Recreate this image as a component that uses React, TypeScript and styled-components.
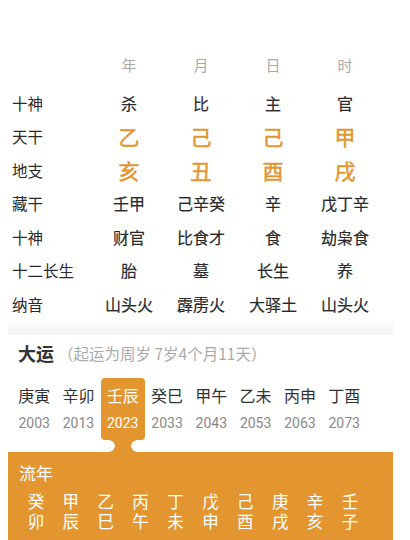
import React from "react";
import styled, { createGlobalStyle } from "styled-components";

const ORANGE = "#E3962F";

const Global = createGlobalStyle`
  html, body { margin: 0; padding: 0; background: #fff; }
  body {
    font-family: "Noto Sans CJK SC", "Noto Sans", sans-serif;
    color: #333;
    width: 410px;
    overflow: hidden;
  }
`;

const Page = styled.div`
  width: 410px;
  height: 540px;
  overflow: hidden;
`;

const Table = styled.div`
  padding-top: 47px;
  display: grid;
  grid-template-columns: 93px repeat(4, 72px);
`;

const HeadCell = styled.div`
  height: 34px;
  margin-bottom: 5px;
  display: flex;
  align-items: center;
  justify-content: center;
  font-size: 15px;
  color: #aaa;
`;

const Label = styled.div`
  height: 33.5px;
  display: flex;
  align-items: center;
  padding-left: 12px;
  font-size: 15.5px;
  color: #2a2a2a;
`;

const Cell = styled.div<{ $big?: boolean }>`
  height: 33.5px;
  display: flex;
  align-items: center;
  justify-content: center;
  font-size: ${(p) => (p.$big ? "21px" : "16px")};
  color: ${(p) => (p.$big ? ORANGE : "#2a2a2a")};
  -webkit-text-stroke: ${(p) => (p.$big ? "0.5px" : "0.2px")} currentColor;
`;

const Band = styled.div`
  margin: 1.5px 17px 0 8px;
  height: 13px;
  background: linear-gradient(#fafafa, #f5f5f5);
`;

const DaYunTitle = styled.div`
  margin-top: 6px;
  padding-left: 18px;
  height: 24px;
  display: flex;
  align-items: center;
  gap: 4px;
`;

const TitleMain = styled.span`
  font-size: 18px;
  font-weight: 700;
  color: #333;
`;

const TitleSub = styled.span`
  font-size: 15.5px;
  color: #aaa;
`;

const DaYunRow = styled.div`
  margin-top: 13px;
  padding-left: 12px;
  display: flex;
`;

const DaYunItem = styled.div`
  width: 44.3px;
  display: flex;
  flex-direction: column;
  align-items: center;
`;

const DaYunBox = styled.div<{ $active?: boolean }>`
  width: 44px;
  height: 62px;
  border-radius: 4px;
  background: ${(p) => (p.$active ? ORANGE : "transparent")};
  display: flex;
  flex-direction: column;
  align-items: center;
  padding-top: 5px;
  box-sizing: border-box;
`;

const GanZhi = styled.div<{ $active?: boolean }>`
  height: 24px;
  line-height: 24px;
  font-size: 16px;
  color: ${(p) => (p.$active ? "#fff" : "#333")};
`;

const Year = styled.div<{ $active?: boolean }>`
  margin-top: 6px;
  height: 20px;
  line-height: 20px;
  font-size: 14px;
  font-family: "Roboto", "Noto Sans", sans-serif;
  color: ${(p) => (p.$active ? "#fff" : "#888")};
`;

const Neck = styled.div<{ $active?: boolean }>`
  width: 28px;
  height: 12px;
  visibility: ${(p) => (p.$active ? "visible" : "hidden")};
  background:
    radial-gradient(circle at 0 50%, #fff 5.5px, transparent 6px),
    radial-gradient(circle at 100% 50%, #fff 5.5px, transparent 6px),
    ${ORANGE};
`;

const LiuNian = styled.div`
  margin: 0 17px 0 8px;
  background: ${ORANGE};
  padding: 10px 0 20px 10px;
  color: #fff;
`;

const LiuTitle = styled.div`
  height: 22px;
  line-height: 22px;
  font-size: 17px;
  padding-left: 1px;
`;

const LiuGrid = styled.div`
  margin-top: 7px;
  display: grid;
  grid-template-columns: repeat(10, 34.9px);
  padding-left: 0.5px;
`;

const LiuCell = styled.div`
  height: 20px;
  line-height: 20px;
  text-align: center;
  font-size: 16.5px;
`;

const pillars = [
  { shen: "杀", gan: "乙", zhi: "亥", cang: "壬甲", shen2: "财官", cs: "胎", ny: "山头火" },
  { shen: "比", gan: "己", zhi: "丑", cang: "己辛癸", shen2: "比食才", cs: "墓", ny: "霹雳火" },
  { shen: "主", gan: "己", zhi: "酉", cang: "辛", shen2: "食", cs: "长生", ny: "大驿土" },
  { shen: "官", gan: "甲", zhi: "戌", cang: "戊丁辛", shen2: "劫枭食", cs: "养", ny: "山头火" },
];

const rows: { label: string; key: keyof (typeof pillars)[0]; big?: boolean }[] = [
  { label: "十神", key: "shen" },
  { label: "天干", key: "gan", big: true },
  { label: "地支", key: "zhi", big: true },
  { label: "藏干", key: "cang" },
  { label: "十神", key: "shen2" },
  { label: "十二长生", key: "cs" },
  { label: "纳音", key: "ny" },
];

const dayun = [
  ["庚寅", "2003"],
  ["辛卯", "2013"],
  ["壬辰", "2023"],
  ["癸巳", "2033"],
  ["甲午", "2043"],
  ["乙未", "2053"],
  ["丙申", "2063"],
  ["丁酉", "2073"],
];

const liuGan = ["癸", "甲", "乙", "丙", "丁", "戊", "己", "庚", "辛", "壬"];
const liuZhi = ["卯", "辰", "巳", "午", "未", "申", "酉", "戌", "亥", "子"];

export default function App() {
  return (
    <Page>
      <Global />
      <Table>
        <HeadCell />
        {["年", "月", "日", "时"].map((h) => (
          <HeadCell key={h}>{h}</HeadCell>
        ))}
        {rows.map((r, i) => (
          <React.Fragment key={i}>
            <Label>{r.label}</Label>
            {pillars.map((p, j) => (
              <Cell key={j} $big={r.big}>
                {p[r.key]}
              </Cell>
            ))}
          </React.Fragment>
        ))}
      </Table>
      <Band />
      <DaYunTitle>
        <TitleMain>大运</TitleMain>
        <TitleSub>（起运为周岁 7岁4个月11天）</TitleSub>
      </DaYunTitle>
      <DaYunRow>
        {dayun.map(([gz, y], i) => {
          const active = i === 2;
          return (
            <DaYunItem key={gz}>
              <DaYunBox $active={active}>
                <GanZhi $active={active}>{gz}</GanZhi>
                <Year $active={active}>{y}</Year>
              </DaYunBox>
              <Neck $active={active} />
            </DaYunItem>
          );
        })}
      </DaYunRow>
      <LiuNian>
        <LiuTitle>流年</LiuTitle>
        <LiuGrid>
          {liuGan.map((g) => (
            <LiuCell key={"g" + g}>{g}</LiuCell>
          ))}
          {liuZhi.map((z) => (
            <LiuCell key={"z" + z}>{z}</LiuCell>
          ))}
        </LiuGrid>
      </LiuNian>
    </Page>
  );
}
